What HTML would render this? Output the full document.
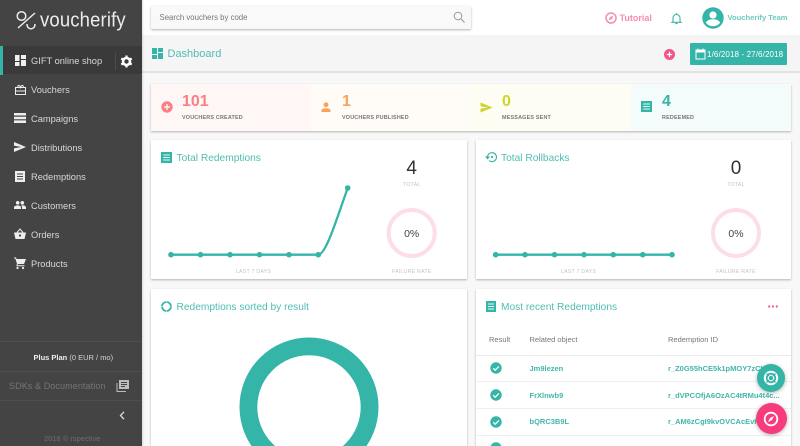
<!DOCTYPE html>
<html><head><meta charset="utf-8">
<style>
html,body{margin:0;padding:0;width:800px;height:446px;overflow:hidden}
body{position:relative;background:#f8f8f8;font-family:"Liberation Sans",sans-serif;color:#333}
#w{position:absolute;left:0;top:0;width:800px;height:446px;overflow:hidden;filter:blur(.3px)}
.a{position:absolute}
.t{position:absolute;white-space:nowrap;line-height:1}
svg{position:absolute;overflow:visible}
.card{position:absolute;background:#fff;box-shadow:0 1px 2px rgba(0,0,0,.28)}
.nav{position:absolute;left:31px;font-size:9.3px;color:#d8d8d8;white-space:nowrap;line-height:12px}
.teal{color:#4fbdb2}
.lab{font-size:5.4px;font-weight:bold;color:#777;letter-spacing:.2px}
.sm{font-size:5.3px;color:#c4c4c4;letter-spacing:.2px}
.num{font-size:16px;font-weight:bold}
.id{font-size:7.5px;font-weight:bold;color:#43b6aa}
</style></head><body><div id="w">

<!-- top bar -->
<div class="a" style="left:142px;top:0;width:658px;height:35px;background:#fff"></div>
<div class="a" style="left:142px;top:35px;width:658px;height:36px;background:#f5f5f5;border-bottom:2px solid #e2e2e2"></div>
<div class="a" style="left:151px;top:6px;width:320px;height:23px;background:#f9f9f9;box-shadow:0 1px 2px rgba(0,0,0,.3);border-radius:1px"></div>
<div class="t" style="left:159.5px;top:13.5px;font-size:7.8px;color:#777">Search vouchers by code</div>
<svg style="left:453px;top:11px" width="12" height="12" viewBox="0 0 12 12"><circle cx="5" cy="5" r="3.8" fill="none" stroke="#999" stroke-width="1"/><path d="M8 8l3.5 3.5" stroke="#999" stroke-width="1.1"/></svg>

<!-- tutorial -->
<svg style="left:605px;top:12px" width="12" height="12" viewBox="0 0 12 12"><circle cx="6" cy="6" r="5" fill="none" stroke="#f78cae" stroke-width="1.5"/><path d="M8.4 3.600L6.900 7 3.600 8.400 5 5z" fill="#f78cae"/></svg>
<div class="t" style="left:619.5px;top:13.5px;font-size:9px;font-weight:bold;color:#f78cae">Tutorial</div>
<svg style="left:671px;top:12px" width="11" height="13" viewBox="0 0 11 13"><path d="M2 9.500V6a3.500 3.500 0 0 1 7 0v3.500l1 .8H1z" fill="none" stroke="#3fb5a9" stroke-width="1.100"/><path d="M4.300 11.500h2.400" stroke="#3fb5a9" stroke-width="1.200"/><path d="M5.500 1v1.500" stroke="#3fb5a9" stroke-width="1.200"/></svg>
<svg style="left:702px;top:7px" width="22" height="22" viewBox="0 0 22 22"><circle cx="11" cy="11" r="10.700" fill="#35b4a8"/><circle cx="11" cy="8" r="3.600" fill="#fff"/><path d="M3.800 15.600c1.600-2.600 4.400-3.400 7.200-3.400s5.600.8 7.200 3.400c-1.600 2.200-4.200 3.500-7.200 3.500s-5.600-1.300-7.200-3.500z" fill="#fff"/></svg>
<div class="t" style="left:727.5px;top:14px;font-size:7.600px;font-weight:bold;color:#6fc9bf">Voucherify Team</div>

<!-- dashboard header -->
<svg style="left:152px;top:48px" width="11" height="11" viewBox="0 0 11 11" fill="#35b4a8"><path d="M0 0h5v6H0zM6 0h5v4H6zM0 7h5v4H0zM6 5h5v6H6z"/></svg>
<div class="t" style="left:167.500px;top:49px;font-size:11px;color:#4fbdb2">Dashboard</div>
<svg style="left:664px;top:49px" width="11" height="11" viewBox="0 0 11 11"><circle cx="5.500" cy="5.500" r="5.500" fill="#f4538a"/><path d="M5.500 2.800v5.400M2.800 5.500h5.400" stroke="#fff" stroke-width="1.200"/></svg>
<div class="a" style="left:690px;top:43px;width:97px;height:22px;background:#35b4a8;border-radius:1px"></div>
<svg style="left:695px;top:48px" width="11" height="12" viewBox="0 0 11 12"><path d="M1 2h9v9H1z" fill="none" stroke="#fff" stroke-width="1"/><path d="M1 2h9v2.500H1z" fill="#fff"/><path d="M3 .5v2M8 .5v2" stroke="#fff" stroke-width="1"/></svg>
<div class="t" style="left:707px;top:50.500px;font-size:8px;color:#fff;letter-spacing:.12px">1/6/2018 - 27/6/2018</div>

<!-- stats -->
<div class="card" style="left:151px;top:84px;width:640px;height:47px"></div>
<div class="a" style="left:151px;top:84px;width:160px;height:47px;background:#fff6f6"></div>
<div class="a" style="left:311px;top:84px;width:160px;height:47px;background:#fffbf6"></div>
<div class="a" style="left:471px;top:84px;width:160px;height:47px;background:#fdfdf4"></div>
<div class="a" style="left:631px;top:84px;width:160px;height:47px;background:#f3fbfb"></div>

<svg style="left:161px;top:101px" width="12" height="12" viewBox="0 0 12 12"><circle cx="6" cy="6" r="5.700" fill="#fa7f85"/><path d="M6 3v6M3 6h6" stroke="#fff" stroke-width="1.200"/></svg>
<div class="t num" style="left:182px;top:93.500px;color:#fa7f85">101</div>
<div class="t lab" style="left:182px;top:115.500px">VOUCHERS CREATED</div>

<svg style="left:321px;top:102px" width="10" height="10" viewBox="0 0 10 10" fill="#f9a259"><circle cx="5" cy="2.800" r="2.400"/><path d="M.5 10V8.300C.5 6.800 3 6.200 5 6.200s4.500.6 4.500 2.100V10z"/></svg>
<div class="t num" style="left:342px;top:93.500px;color:#f9a259">1</div>
<div class="t lab" style="left:342px;top:115.500px">VOUCHERS PUBLISHED</div>

<svg style="left:480px;top:102px" width="13" height="11" viewBox="0 0 13 11" fill="#cfd42c"><path d="M.5.500L12.500 5.500.5 10.500V6.800L8 5.500.5 4.200z"/></svg>
<div class="t num" style="left:502px;top:93.500px;color:#cfd42c">0</div>
<div class="t lab" style="left:502px;top:115.500px">MESSAGES SENT</div>

<svg style="left:641px;top:101px" width="11" height="11" viewBox="0 0 11 11"><path d="M0 0h11v11H0z" fill="#35b4a8"/><path d="M2.200 3h6.600M2.200 5.500h6.600M2.200 8h6.600" stroke="#e9f8f6" stroke-width="1"/></svg>
<div class="t num" style="left:662px;top:93.500px;color:#35b4a8">4</div>
<div class="t lab" style="left:662px;top:115.500px">REDEEMED</div>

<!-- total redemptions -->
<div class="card" style="left:151px;top:140px;width:316px;height:139px"></div>
<svg style="left:161px;top:152px" width="11" height="11" viewBox="0 0 11 11"><path d="M0 0h11v11H0z" fill="#35b4a8"/><path d="M2.200 3h6.600M2.200 5.500h6.600M2.200 8h6.600" stroke="#e9f8f6" stroke-width="1"/></svg>
<div class="t teal" style="left:176.500px;top:154px;font-size:10.200px">Total Redemptions</div>
<svg style="left:151px;top:140px" width="316" height="139" viewBox="151 140 316 139">
<path d="M171 254.700H318.300C326 254.700 337 218 347.700 188" fill="none" stroke="#35b4a8" stroke-width="2.300"/>
<g fill="#35b4a8"><circle cx="171" cy="254.700" r="2.800"/><circle cx="200.500" cy="254.700" r="2.800"/><circle cx="230" cy="254.700" r="2.800"/><circle cx="259.500" cy="254.700" r="2.800"/><circle cx="289" cy="254.700" r="2.800"/><circle cx="318.300" cy="254.700" r="2.800"/><circle cx="347.700" cy="188" r="2.800"/></g>
<circle cx="411.700" cy="233" r="23" fill="none" stroke="#fddde6" stroke-width="4"/>
</svg>
<div class="t" style="left:361.700px;width:100px;text-align:center;top:159px;font-size:19px;color:#333">4</div>
<div class="t sm" style="left:361.700px;width:100px;text-align:center;top:183px">TOTAL</div>
<div class="t" style="left:361.700px;width:100px;text-align:center;top:229px;font-size:10.500px;color:#444">0%</div>
<div class="t sm" style="left:361.700px;width:100px;text-align:center;top:269.500px">FAILURE RATE</div>
<div class="t sm" style="left:203.500px;width:100px;text-align:center;top:269.500px">LAST 7 DAYS</div>

<!-- total rollbacks -->
<div class="card" style="left:476px;top:140px;width:315px;height:139px"></div>
<svg style="left:485px;top:151px" width="12" height="12" viewBox="0 0 12 12"><path d="M2.500 6a4.500 4.500 0 1 1 1.500 3.500" fill="none" stroke="#35b4a8" stroke-width="1.100"/><path d="M0 5.500h5L2.500 8.500z" fill="#35b4a8"/><circle cx="7" cy="6" r="1.100" fill="#35b4a8"/></svg>
<div class="t teal" style="left:501px;top:154px;font-size:10.200px">Total Rollbacks</div>
<svg style="left:476px;top:140px" width="315" height="139" viewBox="476 140 315 139">
<path d="M495.700 254.700H672" fill="none" stroke="#35b4a8" stroke-width="2.300"/>
<g fill="#35b4a8"><circle cx="495.700" cy="254.700" r="2.800"/><circle cx="525" cy="254.700" r="2.800"/><circle cx="554.500" cy="254.700" r="2.800"/><circle cx="584" cy="254.700" r="2.800"/><circle cx="613.300" cy="254.700" r="2.800"/><circle cx="642.700" cy="254.700" r="2.800"/><circle cx="672" cy="254.700" r="2.800"/></g>
<circle cx="736" cy="233" r="23" fill="none" stroke="#fddde6" stroke-width="4"/>
</svg>
<div class="t" style="left:686px;width:100px;text-align:center;top:159px;font-size:19px;color:#333">0</div>
<div class="t sm" style="left:686px;width:100px;text-align:center;top:183px">TOTAL</div>
<div class="t" style="left:686px;width:100px;text-align:center;top:229px;font-size:10.500px;color:#444">0%</div>
<div class="t sm" style="left:686px;width:100px;text-align:center;top:269.500px">FAILURE RATE</div>
<div class="t sm" style="left:528.500px;width:100px;text-align:center;top:269.500px">LAST 7 DAYS</div>

<!-- donut card -->
<div class="card" style="left:151px;top:289px;width:316px;height:170px"></div>
<svg style="left:161px;top:301px" width="11" height="11" viewBox="0 0 11 11"><circle cx="5.500" cy="5.500" r="4.500" fill="none" stroke="#35b4a8" stroke-width="1.800" stroke-dasharray="6.500 .6"/></svg>
<div class="t teal" style="left:176.500px;top:302.500px;font-size:10.200px">Redemptions sorted by result</div>
<svg style="left:230px;top:330px" width="160" height="116" viewBox="230 330 160 116"><circle cx="309" cy="407" r="60.600" fill="none" stroke="#35b4a8" stroke-width="17.800"/></svg>

<!-- recent card -->
<div class="card" style="left:476px;top:289px;width:315px;height:170px"></div>
<svg style="left:486px;top:301px" width="10" height="11" viewBox="0 0 10 11"><path d="M0 0h10v11H0z" fill="#35b4a8"/><path d="M2 3h6M2 5.500h6M2 8h6" stroke="#e9f8f6" stroke-width="1"/></svg>
<div class="t teal" style="left:501px;top:302.500px;font-size:10.200px">Most recent Redemptions</div>
<svg style="left:768px;top:305px" width="10" height="3" viewBox="0 0 10 3" fill="#f4538a"><circle cx="1.200" cy="1.500" r="1.100"/><circle cx="5" cy="1.500" r="1.100"/><circle cx="8.800" cy="1.500" r="1.100"/></svg>
<div class="t" style="left:489px;top:336px;font-size:7.500px;color:#777">Result</div>
<div class="t" style="left:529.500px;top:336px;font-size:7.500px;color:#777">Related object</div>
<div class="t" style="left:668px;top:336px;font-size:7.500px;color:#777">Redemption ID</div>
<div class="a" style="left:476px;top:355px;width:315px;height:1px;background:#eaeaea"></div>
<div class="a" style="left:476px;top:381px;width:315px;height:1px;background:#efefef"></div>
<div class="a" style="left:476px;top:408px;width:315px;height:1px;background:#efefef"></div>
<div class="a" style="left:476px;top:435px;width:315px;height:1px;background:#efefef"></div>

<svg style="left:490px;top:362px" width="12" height="12" viewBox="0 0 12 12"><circle cx="6" cy="6" r="5.700" fill="#35b4a8"/><path d="M3.200 6.200l2 2 3.700-3.800" fill="none" stroke="#fff" stroke-width="1.300"/></svg>
<div class="t id" style="left:529.500px;top:365px">Jm9lezen</div>
<div class="t id" style="left:668px;top:365px">r_Z0G55hCE5k1pMOY7zCW...</div>
<svg style="left:490px;top:388.500px" width="12" height="12" viewBox="0 0 12 12"><circle cx="6" cy="6" r="5.700" fill="#35b4a8"/><path d="M3.200 6.200l2 2 3.700-3.800" fill="none" stroke="#fff" stroke-width="1.300"/></svg>
<div class="t id" style="left:529.500px;top:391.500px">FrXlnwb9</div>
<div class="t id" style="left:668px;top:391.500px">r_dVPCOfjA6OzAC4tRMu4t4c...</div>
<svg style="left:490px;top:415.500px" width="12" height="12" viewBox="0 0 12 12"><circle cx="6" cy="6" r="5.700" fill="#35b4a8"/><path d="M3.200 6.200l2 2 3.700-3.800" fill="none" stroke="#fff" stroke-width="1.300"/></svg>
<div class="t id" style="left:529.500px;top:418px">bQRC3B9L</div>
<div class="t id" style="left:668px;top:418px">r_AM6zCgI9kvOVCAcEvK...</div>
<svg style="left:490px;top:442px" width="12" height="12" viewBox="0 0 12 12"><circle cx="6" cy="6" r="5.700" fill="#35b4a8"/></svg>

<!-- floating buttons -->
<div class="a" style="left:757px;top:364px;width:28px;height:28px;border-radius:50%;background:#35b4a8;box-shadow:0 1px 4px rgba(0,0,0,.3)"></div>
<svg style="left:763px;top:370px" width="16" height="16" viewBox="0 0 16 16"><circle cx="8" cy="8" r="6.200" fill="none" stroke="#fff" stroke-width="2"/><circle cx="8" cy="8" r="2.800" fill="none" stroke="#fff" stroke-width="1.200"/><path d="M3.500 3.500l2.500 2.500M12.500 3.500L10 6M3.500 12.500L6 10M12.500 12.500L10 10" stroke="#35b4a8" stroke-width="1.400"/></svg>
<div class="a" style="left:755.500px;top:403px;width:31px;height:31px;border-radius:50%;background:#f73b7d;box-shadow:0 1px 4px rgba(0,0,0,.3)"></div>
<svg style="left:763px;top:411px" width="16" height="16" viewBox="0 0 16 16"><circle cx="8" cy="8" r="6.300" fill="none" stroke="#fff" stroke-width="1.800"/><path d="M11 5L9 9 5 11 7 7z" fill="#fff"/></svg>

<!-- sidebar -->
<div class="a" style="left:0;top:0;width:142px;height:446px;background:#444;box-shadow:1px 0 2px rgba(0,0,0,.12)"></div>
<div class="a" style="left:0;top:46px;width:142px;height:28px;background:#3a3a3a"></div>
<div class="a" style="left:0;top:46px;width:3px;height:29px;background:#35b4a8"></div>
<div class="a" style="left:115px;top:52px;width:1px;height:18px;background:#4c4c4c"></div>

<!-- logo -->
<svg style="left:15px;top:9px" width="22" height="21" viewBox="0 0 22 21" fill="none" stroke="#ececec" stroke-width="1.500"><circle cx="6.500" cy="7" r="4.300"/><path d="M3 19L20 4"/><path d="M12 15c0 6.500 8 6.500 8 0"/></svg>
<div class="t" style="left:40px;top:10.500px;font-size:18.500px;color:#ececec;letter-spacing:.15px;transform:scaleY(1.1);transform-origin:0 50%">voucherify</div>

<svg style="left:15px;top:55px" width="11" height="11" viewBox="0 0 11 11" fill="#f0f0f0"><path d="M0 0h4.500v6H0zM6 0h5v4H6zM0 7h4.500v4H0zM6 5h5v6H6z"/></svg>
<div class="nav" style="top:54.500px">GIFT online shop</div>
<svg style="left:120px;top:55px" width="13" height="13" viewBox="0 0 13 13"><circle cx="6.500" cy="6.500" r="3.500" fill="none" stroke="#fff" stroke-width="2.600"/><path d="M6.500 .5v2.500M6.500 10v2.500M1.300 3.500l2.200 1.300M9.500 8.200l2.200 1.300M1.300 9.500l2.200-1.300M9.500 4.800l2.200-1.300" stroke="#fff" stroke-width="2.200"/></svg>

<svg style="left:15px;top:84px" width="11" height="11" viewBox="0 0 11 11"><path d="M.5 3.500h10v7H.5z" fill="none" stroke="#eee" stroke-width="1"/><path d="M.5 7h10" stroke="#eee" stroke-width="1"/><path d="M3 3.500C2 1 4.500 .5 5.500 3.500 6.500 .5 9 1 8 3.500" fill="none" stroke="#eee" stroke-width="1"/></svg>
<div class="nav" style="top:83.500px">Vouchers</div>

<svg style="left:14px;top:113px" width="12" height="10" viewBox="0 0 12 10" fill="#eee"><path d="M0 0h12v2.500H0zM0 3.700h12v2.500H0zM0 7.400h12V10H0z"/></svg>
<div class="nav" style="top:112.500px">Campaigns</div>

<svg style="left:14px;top:142px" width="12" height="10" viewBox="0 0 12 10" fill="#eee"><path d="M0 0l12 5-12 5V6.200L7.500 5 0 3.800z"/></svg>
<div class="nav" style="top:141.500px">Distributions</div>

<svg style="left:15px;top:171px" width="10" height="11" viewBox="0 0 10 11"><path d="M0 0h10v11H0z" fill="#eee"/><path d="M2 3h6M2 5.500h6M2 8h6" stroke="#444" stroke-width="1"/></svg>
<div class="nav" style="top:170.500px">Redemptions</div>

<svg style="left:14px;top:201px" width="12" height="8" viewBox="0 0 12 8" fill="#eee"><circle cx="3.700" cy="1.800" r="1.800"/><circle cx="8.300" cy="1.800" r="1.800"/><path d="M0 8V6.500C0 5 2.500 4.400 3.700 4.400S7 5 7 6.500V8zM8 8V6.500c0-.8-.3-1.500-1-2 .5-.1 1-.2 1.400-.2C10 4.300 12 5 12 6.500V8z"/></svg>
<div class="nav" style="top:199.500px">Customers</div>

<svg style="left:14px;top:228px" width="12" height="11" viewBox="0 0 12 11" fill="#eee"><path d="M0 4.500h12l-1.500 6.500h-9z"/><path d="M3 4.500L6 1l3 3.500" fill="none" stroke="#eee" stroke-width="1"/><circle cx="6" cy="7.500" r="1.100" fill="#444"/></svg>
<div class="nav" style="top:228.500px">Orders</div>

<svg style="left:14px;top:257px" width="12" height="12" viewBox="0 0 12 12" fill="#eee"><path d="M0 .5h2L2.600 2H12l-2 5H4L3.400 8.200H10.500v1H2.300L3 6.800 1.300 1.500H0z"/><circle cx="3.500" cy="11" r="1.100"/><circle cx="9" cy="11" r="1.100"/></svg>
<div class="nav" style="top:257.500px">Products</div>

<div class="a" style="left:0;top:341px;width:142px;height:1px;background:#4e4e4e"></div>
<div class="t" style="left:33.500px;top:353.500px;font-size:7.500px;color:#d4d4d4"><b style="color:#eee">Plus Plan</b> (0 EUR / mo)</div>
<div class="a" style="left:0;top:371px;width:142px;height:1px;background:#4e4e4e"></div>
<div class="t" style="left:9px;top:382px;font-size:9px;color:#757575;letter-spacing:.1px">SDKs &amp; Documentation</div>
<svg style="left:116px;top:380px" width="13" height="12" viewBox="0 0 13 12"><path d="M3 0h10v9H3z" fill="#bdbdbd"/><path d="M5 2.500h6M5 4.500h6M5 6.500h4" stroke="#444" stroke-width=".9"/><path d="M1 3v8.500h9" fill="none" stroke="#bdbdbd" stroke-width="1"/></svg>
<div class="a" style="left:0;top:400px;width:142px;height:1px;background:#4e4e4e"></div>
<svg style="left:119px;top:411px" width="6" height="9" viewBox="0 0 6 9"><path d="M5 .8L1.500 4.500 5 8.200" fill="none" stroke="#ddd" stroke-width="1.300"/></svg>
<div class="t" style="left:44px;top:434.500px;font-size:7.500px;color:#6e6e6e">2018 © rspective</div>

</div></body></html>
